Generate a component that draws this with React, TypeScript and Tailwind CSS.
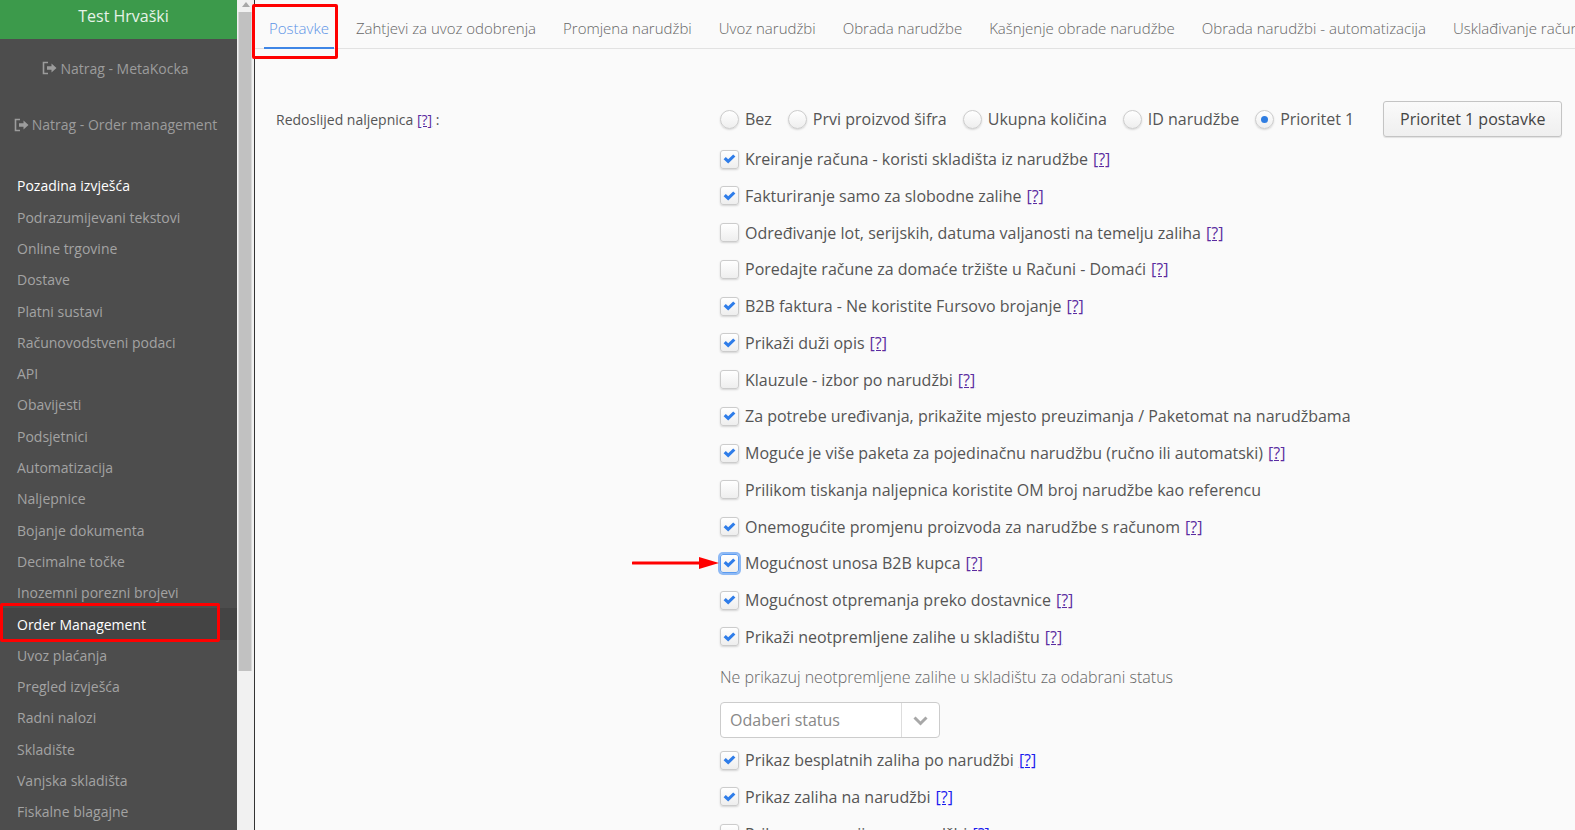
const FONT = "font-['Open_Sans',sans-serif]"

const MENU = [
  'Podrazumijevani tekstovi',
  'Online trgovine',
  'Dostave',
  'Platni sustavi',
  'Računovodstveni podaci',
  'API',
  'Obavijesti',
  'Podsjetnici',
  'Automatizacija',
  'Naljepnice',
  'Bojanje dokumenta',
  'Decimalne točke',
  'Inozemni porezni brojevi',
]

const MENU_AFTER = [
  'Uvoz plaćanja',
  'Pregled izvješća',
  'Radni nalozi',
  'Skladište',
  'Vanjska skladišta',
  'Fiskalne blagajne',
]

const TABS = [
  'Zahtjevi za uvoz odobrenja',
  'Promjena narudžbi',
  'Uvoz narudžbi',
  'Obrada narudžbe',
  'Kašnjenje obrade narudžbe',
  'Obrada narudžbi - automatizacija',
  'Usklađivanje računa',
]

const RADIOS = ['Bez', 'Prvi proizvod šifra', 'Ukupna količina', 'ID narudžbe']

type Opt = { label: string; on: boolean; help?: boolean; focus?: boolean }

const OPTIONS: Opt[] = [
  { label: 'Kreiranje računa - koristi skladišta iz narudžbe', on: true, help: true },
  { label: 'Fakturiranje samo za slobodne zalihe', on: true, help: true },
  { label: 'Određivanje lot, serijskih, datuma valjanosti na temelju zaliha', on: false, help: true },
  { label: 'Poredajte račune za domaće tržište u Računi - Domaći', on: false, help: true },
  { label: 'B2B faktura - Ne koristite Fursovo brojanje', on: true, help: true },
  { label: 'Prikaži duži opis', on: true, help: true },
  { label: 'Klauzule - izbor po narudžbi', on: false, help: true },
  { label: 'Za potrebe uređivanja, prikažite mjesto preuzimanja / Paketomat na narudžbama', on: true },
  { label: 'Moguće je više paketa za pojedinačnu narudžbu (ručno ili automatski)', on: true, help: true },
  { label: 'Prilikom tiskanja naljepnica koristite OM broj narudžbe kao referencu', on: false },
  { label: 'Onemogućite promjenu proizvoda za narudžbe s računom', on: true, help: true },
  { label: 'Mogućnost unosa B2B kupca', on: true, help: true, focus: true },
  { label: 'Mogućnost otpremanja preko dostavnice', on: true, help: true },
  { label: 'Prikaži neotpremljene zalihe u skladištu', on: true, help: true },
]

function BackIcon() {
  return (
    <svg width="15" height="14" viewBox="0 0 15 14" className="mr-[3px]">
      <path d="M6 1.5H1.5v11H6" fill="none" stroke="currentColor" strokeWidth="1.6" />
      <path d="M5 5.2h4.5V2.4L14.5 7l-5 4.6V8.8H5z" fill="currentColor" />
    </svg>
  )
}

function Help({ blue }: { blue?: boolean }) {
  return <a className={`ml-[5px] underline ${blue ? 'text-[#1a1aee]' : 'text-[#5b2ba0]'}`}>[?]</a>
}

function Tick() {
  return (
    <svg width="13" height="10" viewBox="0 0 13 10">
      <path d="M0.6 5.2L2.8 3l2.4 2.3L10.2 0.4l2.2 2.2L5.2 9.6z" fill="#2f7de9" />
    </svg>
  )
}

function CheckBox({ on, focus }: { on: boolean; focus?: boolean }) {
  return (
    <span
      className={`flex h-[19px] w-[19px] shrink-0 items-center justify-center rounded-[3px] border bg-gradient-to-b from-white to-[#eeeeee] shadow-[0_1px_2px_rgba(0,0,0,0.15)] ${
        focus ? 'border-[#5b9bf0] ring-2 ring-[#8db9f5]' : 'border-[#cccccc]'
      }`}
    >
      {on && <Tick />}
    </span>
  )
}

function Radio({ on }: { on?: boolean }) {
  return (
    <span className="flex h-[19px] w-[19px] shrink-0 items-center justify-center rounded-full border border-[#cccccc] bg-gradient-to-b from-white to-[#eeeeee] shadow-[0_1px_2px_rgba(0,0,0,0.15)]">
      {on && <span className="h-[7px] w-[7px] rounded-full bg-[#2f7de1]" />}
    </span>
  )
}

function OptionRow({ opt, blue }: { opt: Opt; blue?: boolean }) {
  return (
    <div className="flex h-[36.75px] items-center">
      <CheckBox on={opt.on} focus={opt.focus} />
      <span className="ml-[6px] whitespace-nowrap">
        {opt.label}
        {opt.help && <Help blue={blue} />}
      </span>
    </div>
  )
}

function Sidebar() {
  const item = 'flex h-[31.3px] shrink-0 items-center pl-[17px] text-[14px] text-[#a3a3a3]'
  return (
    <aside className="flex h-full w-[237px] shrink-0 flex-col overflow-hidden bg-[#4d4d4d]">
      <div className="flex h-[39px] shrink-0 items-center justify-center bg-[#3c9a4b] pb-[8px] pl-[10px] text-[16px] text-[#e6f3e8]">
        Test Hrvaški
      </div>
      <div className="flex h-[56.5px] shrink-0 items-center justify-center pr-[6px] pt-[2px] text-[14px] text-[#9c9c9c]">
        <BackIcon />
        Natrag - MetaKocka
      </div>
      <div className="flex h-[56.5px] shrink-0 items-center justify-center pr-[6px] pt-[2px] text-[14px] text-[#9c9c9c]">
        <BackIcon />
        Natrag - Order management
      </div>
      <div className="mt-[17.5px] flex h-[32px] shrink-0 items-center pl-[17px] text-[14px] text-white">
        Pozadina izvješća
      </div>
      {MENU.map((name) => (
        <div key={name} className={item}>
          {name}
        </div>
      ))}
      <div className="flex h-[31.3px] shrink-0 items-center bg-[#444444] pl-[17px] text-[14px] text-white">
        Order Management
      </div>
      {MENU_AFTER.map((name) => (
        <div key={name} className={item}>
          {name}
        </div>
      ))}
    </aside>
  )
}

function ScrollBar() {
  return (
    <div className="flex h-full w-[17px] shrink-0 flex-col items-center bg-[#f1f1f1]">
      <div className="mt-[2px] h-0 w-0 border-x-[4px] border-b-[5px] border-x-transparent border-b-[#a8a8a8]" />
      <div className="mt-[5px] h-[659px] w-[13px] -translate-x-[0.5px] bg-[#c1c1c1]" />
    </div>
  )
}

export default function App() {
  return (
    <div className={`relative flex h-screen w-full overflow-hidden bg-[#fafafa] ${FONT}`}>
      <Sidebar />
      <ScrollBar />
      <main className="flex h-full min-w-0 flex-1 flex-col overflow-hidden border-l border-[#333333]">
        <nav className="flex h-[49px] shrink-0 items-stretch border-b border-[#e2e2e2] pl-[9px] text-[15px] font-light text-[#666666]">
          <div className="-mb-px mr-[17px] flex items-center border-b-2 border-[#3f86e6] px-[5px] pt-[10px] text-[#5a93e6]">
            Postavke
          </div>
          {TABS.map((tab) => (
            <div key={tab} className="mr-[17px] flex items-center whitespace-nowrap px-[5px] pt-[8px]">
              {tab}
            </div>
          ))}
        </nav>

        <div className="flex pl-[21px] text-[16px] text-[#555555]">
          <div className="w-[444px] shrink-0 pt-[60px] text-[14px] text-[#555555]">
            Redoslijed naljepnica <a className="text-[#5b2ba0] underline">[?]</a> :
          </div>
          <div className="flex-1">
            <div className="mt-[52px] flex h-[36px] items-center">
              {RADIOS.map((r) => (
                <label key={r} className="mr-[16px] flex items-center gap-[6px] whitespace-nowrap">
                  <Radio />
                  {r}
                </label>
              ))}
              <label className="flex items-center gap-[6px] whitespace-nowrap">
                <Radio on />
                Prioritet 1
              </label>
              <button className="ml-[29px] h-[36px] w-[179px] rounded-[3px] border border-[#c4c4c4] bg-gradient-to-b from-[#fafafa] to-[#efefef] text-[#444444] shadow-[0_1px_1px_rgba(0,0,0,0.1)]">
                Prioritet 1 postavke
              </button>
            </div>
            <div className="mt-[3.8px]">
              {OPTIONS.map((opt) => (
                <OptionRow key={opt.label} opt={opt} />
              ))}
            </div>
            <div className="mt-[10px] h-[24px] font-light leading-[24px] text-[#666666]">
              Ne prikazuj neotpremljene zalihe u skladištu za odabrani status
            </div>
            <div className="mt-[13px] flex h-[36px] w-[220px] items-center rounded-[4px] border border-[#cccccc] bg-white text-[#888888]">
              <span className="flex-1 pl-[9px]">Odaberi status</span>
              <span className="flex h-full w-[38px] items-center justify-center border-l border-[#dddddd]">
                <svg width="15" height="11" viewBox="0 0 15 11">
                  <path d="M1.5 2.5l6 6 6-6" fill="none" stroke="#a8a8a8" strokeWidth="3" />
                </svg>
              </span>
            </div>
            <div className="mt-[3.5px]">
              <OptionRow opt={{ label: 'Prikaz besplatnih zaliha po narudžbi', on: true, help: true }} blue />
              <OptionRow opt={{ label: 'Prikaz zaliha na narudžbi', on: true, help: true }} blue />
              <OptionRow opt={{ label: 'Prikaz rezervacija na narudžbi', on: false, help: true }} blue />
            </div>
          </div>
        </div>
      </main>

      <div className="pointer-events-none absolute left-[252px] top-[4px] h-[55px] w-[86px] rounded-[2px] border-[3px] border-[#ff0000]" />
      <div className="pointer-events-none absolute left-0 top-[603px] h-[39px] w-[220px] rounded-[2px] border-[3px] border-[#ff0000]" />
      <svg className="pointer-events-none absolute left-[632px] top-[556px]" width="88" height="14" viewBox="0 0 88 14">
        <path d="M1 7h68" stroke="#ff0000" strokeWidth="3" strokeLinecap="round" />
        <path d="M67 1l20 6-20 6z" fill="#ff0000" />
      </svg>
    </div>
  )
}
